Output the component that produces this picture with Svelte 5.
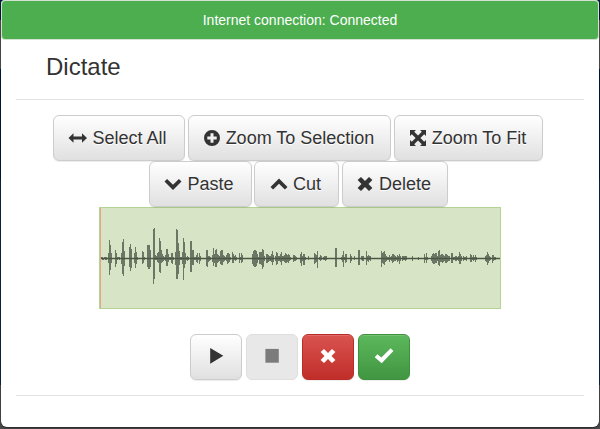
<script>
  const icons = {
    horizontal: 'M-.5 9L4.5 4.2V7.4H13V4.2L18 9L13 13.8V10.6H4.5V13.8Z',
    plus: 'M9 1A8 8 0 1 0 9 17A8 8 0 1 0 9 1ZM7.5 4.3H10.5V7.5H13.7V10.5H10.5V13.7H7.5V10.5H4.3V7.5H7.5Z',
    fit: 'M1 1H7L5.2 2.8L9 6.6L12.8 2.8L11 1H17V7L15.2 5.2L11.4 9L15.2 12.8L17 11V17H11L12.8 15.2L9 11.4L5.2 15.2L7 17H1V11L2.8 12.8L6.6 9L2.8 5.2L1 7Z',
    down: 'M3.1 4L9 9.8L14.9 4L17.5 6.6L9 15L.5 6.6Z',
    up: 'M3.1 14.6L9 8.8L14.9 14.6L17.5 12L9 3.6L.5 12Z',
    remove: 'M5 2L9 5.9L13 2L16.4 5.1L12.5 9L16.4 12.9L13 16L9 12.1L5 16L1.6 12.9L5.5 9L1.6 5.1Z',
    play: 'M3.2 1L16.3 8.8L3.2 16.7Z',
    stop: 'M2.4 1.9H15.8V15.7H2.4Z',
    ok: 'M15.7 1.3L18.4 4L6.7 16.3L-.3 10.2L2.4 7.3L6.4 10.4Z'
  };
  const rows = [
    [['Select All', 'horizontal', 132], ['Zoom To Selection', 'plus', 203], ['Zoom To Fit', 'fit', 149]],
    [['Paste', 'down', 103], ['Cut', 'up', 85], ['Delete', 'remove', 106]]
  ];
  const controls = [
    ['Play', 'play', ''], ['Stop', 'stop', 'disabled'], ['Cancel', 'remove', 'danger'], ['Accept', 'ok', 'success']
  ];
  // Each run: first column, then the peak above/below the axis per pixel column.
  const runs = `101 1/0 1/1 0/1 1/0 1/1 1/1;108 5/4 18/16 13/11 5/4;115 8/8 5/5 1/1 1/0 1/1;121 5/5 16/15 19/17 7/7;129 11/8 14/12 9/9;134 5/4 11/9 6/5 1/1;142 7/5 6/4 1/1;147 13/8 13/10 13/10 8/8;153 29/25 30/20 3/1 2/1 5/3 6/4 20/13 17/14 8/4 4/3;163 2/2 1/1 3/2 9/7 9/7 4/3;169 1/1 1/1 5/4 5/5 1/1;175 6/6 29/20 28/20 15/15 7/6;180 1/1 1/1 6/5 20/21 16/9 5/5 1/1 2/2 1/1;190 17/13 17/13 8/6 8/6;194 1/1 1/1 3/3 5/4 1/1 5/5 2/2;206 8/7 8/8 2/3 2/2 1/1;212 3/3 10/7 4/4 8/8 9/8 4/4 3/3;219 2/2 7/5 8/6 8/6 3/3 2/2;225 1/1 3/2 5/5 5/4 4/3 1/1;232 6/4 4/4 2/1 3/2 1/1;239 5/4 1/1 5/4 3/3;252 4/5 7/7 8/8 8/8 7/7 4/4;258 1/1 6/5 6/5 6/6 9/10 8/8 2/2;266 4/4 4/4 3/3 2/2 2/2 4/3 7/6 3/3;275 2/2 6/6 5/5 2/2;279 2/2 4/3 6/6 2/2;283 2/2 3/3 5/4 4/4 3/3 4/4 3/2 1/1;293 3/3 3/2 2/2 1/1;300 4/4 6/7 2/2 4/6 4/6 1/1;308 2/1;314 5/5 4/4 3/3 7/9;319 1/1 3/2 2/1;323 1/1 2/1 2/2 2/1;335 10/8 10/8;341 1/1 3/3 7/8 1/1 4/4 4/3;350 4/4 2/2;354 2/1;358 8/6 8/6;361 2/1 2/2 2/2;366 7/6 2/2 3/3 2/1 2/2;381 7/8 5/4 6/5 7/6 4/3 2/2 1/1 1/1 3/3 1/1 2/2;392 4/4 4/3 3/2 2/2 1/1 3/3 2/2 4/5 2/2;402 2/2 2/1 2/1 2/2 2/1;412 2/2;418 1/1;424 4/4 1/1 5/4 1/1;431 2/2 4/4 5/5 4/5 5/4 5/4 2/2 7/6 8/7 3/3 4/3 4/4 3/3;444 2/2 4/4 4/4 3/3 2/2 2/2;451 5/4 5/4 1/1 1/1 2/2 2/2 1/1 2/2 6/5 4/5 2/2;463 2/2 1/1 1/1 2/2;470 4/3 3/3 1/1 3/2 1/1 3/3 1/1;485 2/2 3/3 6/6 4/4 2/2 1/1;492 3/4 3/2 1/1 1/1`;
  const wave = runs.split(';').flatMap((run) => {
    const [start, ...peaks] = run.trim().split(' ');
    return peaks.map((peak, i) => {
      const [up, down] = peak.split('/').map(Number);
      return `M${+start + i - 100} ${50 - up}h1v${up + down + 1}h-1z`;
    });
  }).join('');
</script>

{#snippet glyph(name)}
  <svg class="glyph" viewBox="0 0 18 18" aria-hidden="true"><path fill-rule="evenodd" d={icons[name]} /></svg>
{/snippet}

<main class="page">
  <section class="modal">
    <div class="alert">Internet connection: Connected</div>
    <h3>Dictate</h3>
    <div class="body">
      {#each rows as row}
        <div class="toolbar">
          {#each row as [label, icon, width]}
            <button class="btn" style="width: {width}px">{@render glyph(icon)}<span>{label}</span></button>
          {/each}
        </div>
      {/each}
      <div class="wave">
        <svg width="400" height="100" viewBox="0 0 400 100" shape-rendering="crispEdges">
          <path d={wave} fill="#6b7764" />
          <path d="M0 50h400v1H0z" fill="#4b5645" />
          <path d="M0 49h400v1H0zM0 51h400v1H0z" fill="#4b5645" fill-opacity=".25" />
          <path d="M0 0h1v100H0z" fill="#e5a58a" />
        </svg>
      </div>
      <div class="controls">
        {#each controls as [label, icon, kind]}
          <button class="btn {kind}" aria-label={label} disabled={kind === 'disabled'}>{@render glyph(icon)}</button>
        {/each}
      </div>
    </div>
  </section>
</main>

<style>
  :global(body) { margin: 0; overflow: hidden; }
  .page {
    box-sizing: border-box;
    height: 429px;
    padding: 0 1px 2px;
    background: linear-gradient(#001b3d 20px, #535150 20px 69px, #001b3d 69px 180px, #0b2745 180px 385px, #4a494b 385px);
    font-family: "Liberation Sans", Arial, sans-serif;
    color: #333;
  }
  .modal {
    box-sizing: border-box;
    height: 427px;
    background: #fff;
    border-radius: 4px 4px 6px 6px;
    box-shadow: 0 1px 2px rgba(0, 0, 0, .5);
  }
  .alert {
    box-sizing: border-box;
    height: 40px;
    border: 1px solid #d5e2d3;
    border-radius: 4px;
    background: #4cae4f;
    color: #fff;
    font-size: 14px;
    line-height: 38px;
    text-align: center;
  }
  h3 {
    margin: 0 15px;
    padding: 13px 30px 0;
    height: 46px;
    font-size: 24px;
    font-weight: 400;
    line-height: 28px;
    border-bottom: 1px solid #e3e3e3;
  }
  .body {
    box-sizing: border-box;
    height: 296px;
    margin: 0 15px;
    padding-top: 15px;
    border-bottom: 1px solid #e3e3e3;
  }
  .toolbar, .controls { display: flex; justify-content: center; }
  .toolbar { gap: 3px; padding-right: 4px; }
  .toolbar + .toolbar { gap: 2.5px; padding-right: 4px; }
  .btn {
    box-sizing: border-box;
    display: flex;
    align-items: center;
    justify-content: center;
    gap: 5px;
    height: 46px;
    padding: 0 2px 0 0;
    border: 1px solid #ccc;
    border-radius: 6px;
    background: linear-gradient(#fff, #e0e0e0);
    box-shadow: inset 0 1px 0 rgba(255, 255, 255, .15), 0 1px 1px rgba(0, 0, 0, .075);
    color: #333;
    font: 18px/24px "Liberation Sans", Arial, sans-serif;
    text-shadow: 0 1px 0 #fff;
    white-space: nowrap;
  }
  .glyph { width: 18px; height: 18px; flex: none; overflow: visible; fill: currentColor; }
  .wave {
    width: 400px;
    height: 100px;
    margin: 0 auto;
    border: 1px solid #b4d494;
    background: #d7e4c6;
  }
  .wave svg { display: block; }
  .controls { gap: 4px; margin-top: 25px; }
  .controls .btn { width: 52px; padding: 0 0 2px; }
  .controls .disabled { background: #e8e8e8; border-color: #dedede; box-shadow: none; color: #7b7b7b; }
  .controls .danger { background: linear-gradient(#d9534f, #c12e2a); border-color: #b92c28; color: #fff; }
  .controls .success { background: linear-gradient(#5cb85c, #419641); border-color: #3e8f3e; color: #fff; }
</style>
